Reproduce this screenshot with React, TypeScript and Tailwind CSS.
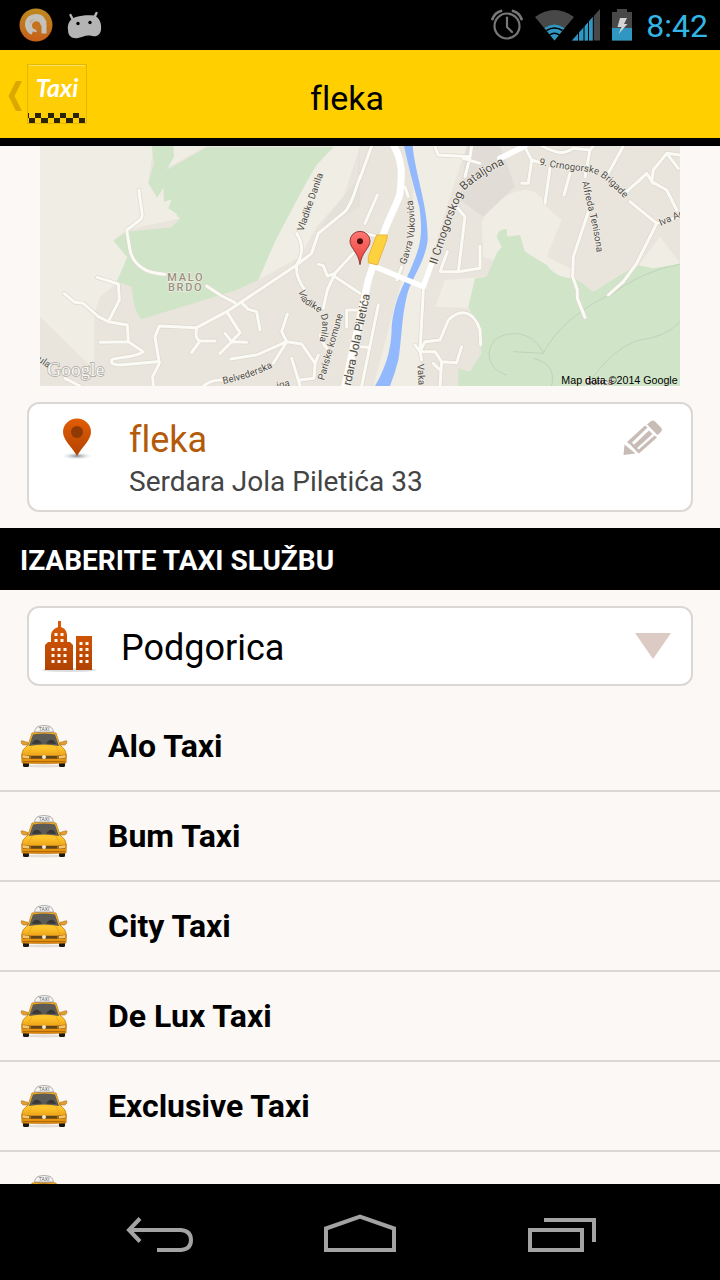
import React from 'react';

interface TaxiService {
  id: number;
  name: string;
}

const services: TaxiService[] = [
  { id: 1, name: 'Alo Taxi' },
  { id: 2, name: 'Bum Taxi' },
  { id: 3, name: 'City Taxi' },
  { id: 4, name: 'De Lux Taxi' },
  { id: 5, name: 'Exclusive Taxi' },
  { id: 6, name: 'G Taxi' }
];

const StatusBar: React.FC = () => (
  <div className="flex h-[50px] shrink-0 items-center justify-between bg-black pl-[19px] pr-3">
    <div className="flex items-center gap-[14px]">
      <svg className="h-[34px] w-[34px]" viewBox="0 0 34 34">
        <defs>
          <linearGradient id="avast" x1="0" y1="0" x2="0" y2="1">
            <stop offset="0" stopColor="#bd8a20" />
            <stop offset="1" stopColor="#c65f18" />
          </linearGradient>
        </defs>
        <circle cx="17" cy="17" r="16.5" fill="url(#avast)" />
        <path
          d="M13.500 24.500 C6 21 6.500 8.500 17 8.500 C22.500 8.500 25 12 25 16.500 V25.500"
          fill="none"
          stroke="#c4c1bd"
          strokeWidth="5"
        />
        <path d="M23 17.500 A5.500 5.500 0 1 0 17.500 23" fill="none" stroke="#c4c1bd" strokeWidth="2.500" />
        <circle cx="17" cy="17.500" r="3.800" fill="#c4731c" />
      </svg>
      <svg className="h-[28px] w-[36px]" viewBox="0 0 36 28">
        <path
          d="M3.500 4 L6 9 M29.500 2 L27.500 6"
          stroke="#b4b4b4"
          strokeWidth="2.500"
          strokeLinecap="round"
        />
        <path
          d="M9 6 C15 4 22 4 27 4.500 C32 6 35 12 34 19 C33 25 28 26.500 23 24.500 C18 24 16 26 11 27 C5 28 1 25 1 19 C0 13 3 7.500 9 6 Z"
          fill="#b4b4b4"
        />
        <circle cx="11" cy="12.500" r="1.700" fill="#000" />
        <circle cx="23" cy="11.500" r="1.700" fill="#000" />
      </svg>
    </div>
    <div className="flex items-center">
      <svg className="h-[36px] w-[144px]" viewBox="0 0 144 36">
        {/* alarm */}
        <g fill="none" stroke="#777" strokeWidth="2.200" strokeLinecap="round">
          <circle cx="17" cy="19" r="12.500" />
          <path d="M17 10.500 V20 L22 25" />
          <path d="M2.500 12 C4 8 7 5 11 4 M23 4 C27 5 30 8 31.500 12" strokeWidth="2.800" />
        </g>
        {/* wifi */}
        <path d="M64.500 33.500 L45 10 Q64.500 -4 84 10 Z" fill="#484848" />
        <path d="M64.500 33.500 L54.500 21 Q64.500 14 74.500 21 Z" fill="#2f97c1" />
        <path d="M56.500 23.500 Q64.500 18.500 72.500 23.500 M59.500 28 Q64.500 24.500 69.500 28" fill="none" stroke="#000" strokeWidth="1.500" />
        {/* signal */}
        <path d="M110 2 V33.500 H82 Z" fill="#484848" />
        <path d="M82 33.500 L103 9.800 V33.500 Z" fill="#2f97c1" />
        <path d="M88.500 20 V34 M94 14 V34 M98.500 10 V34 M103.300 6 V34" stroke="#000" strokeWidth="1" />
        {/* battery */}
        <path d="M122 5 H127 V2 H137 V5 H142 V33.500 H122 Z" fill="#484848" />
        <path d="M122 21 H142 V33.500 H122 Z" fill="#2f97c1" />
        <path d="M130 11 H137 L134 17 H137.500 L128.500 27 L131.500 20 H127.500 Z" fill="#d4d4d4" />
      </svg>
      <span className="ml-3 pt-[2px] text-[32px] leading-10 text-[#33b5e5]">8:42</span>
    </div>
  </div>
);

const AppLogo: React.FC = () => (
  <svg className="h-[60px] w-[60px]" viewBox="0 0 60 60">
    <rect x="0.5" y="0.5" width="59" height="59" fill="#fecd06" stroke="#e5b800" />
    <path d="M2 1.500 H58" stroke="#ffe26a" />
    <text
      x="30"
      y="33"
      textAnchor="middle"
      fill="#fff"
      fontFamily="Lato, sans-serif"
      fontStyle="italic"
      fontWeight="700"
      fontSize="25"
    >
      Taxi
    </text>
    <g fill="#2a2404">
      <rect x="8" y="49" width="6" height="5" />
      <rect x="21" y="49" width="6" height="5" />
      <rect x="33" y="49" width="6" height="5" />
      <rect x="46" y="49" width="6" height="5" />
      <rect x="1" y="49" width="1" height="5" />
      <rect x="2" y="54" width="6" height="5" />
      <rect x="14" y="54" width="7" height="5" />
      <rect x="27" y="54" width="6" height="5" />
      <rect x="39" y="54" width="7" height="5" />
      <rect x="52" y="54" width="6" height="5" />
    </g>
  </svg>
);

const ActionBar: React.FC = () => (
  <header className="relative flex h-24 shrink-0 items-center justify-center border-b-8 border-black bg-[#ffcf00]">
    <button type="button" aria-label="Nazad" className="absolute left-2 flex items-center gap-1">
      <svg className="h-[34px] w-[15px]" viewBox="0 0 15 34">
        <path d="M8 4 H14 L6.500 19 L14 34 H8 L0.500 19 Z" fill="#dba800" />
      </svg>
      <AppLogo />
    </button>
    <h1 className="mt-2 ml-[-26px] text-[34px] leading-10 text-black">fleka</h1>
  </header>
);

const TownMap: React.FC = () => (
  <svg className="block w-full" viewBox="0 18 1920 720" role="img" aria-label="Mapa">
    <defs>
      <path id="street-belvederska" d="M550 732 Q640 715 720 670" />
      <path id="street-danila" d="M776 452 C780 485 795 492 822 508 C858 530 850 560 830 640" />
      <path id="street-bataljona" d="M1190 375 C1225 270 1240 215 1275 150 Q1320 105 1440 50" />
      <path id="street-brigade" d="M1497 74 C1600 95 1640 90 1675 105 C1700 120 1730 150 1785 210" />
      <path id="street-tenisona" d="M1626 125 C1640 200 1665 260 1676 390" />
      <path id="street-gavra" d="M1096 375 C1129 290 1134 240 1106 130" />
      <linearGradient id="marker" x1="0" y1="0" x2="0" y2="1">
        <stop offset="0" stopColor="#ff7672" />
        <stop offset="1" stopColor="#e8403c" />
      </linearGradient>
      <g id="streets">
        <path d="M297 150 C300 200 315 230 300 240 L260 270 C270 330 270 350 290 370 C320 400 350 400 375 403 M500 438 L545 468 L585 488" />
        <path d="M72 460 L105 487 L130 490 L175 530 L205 545 L262 555 L265 605 L310 635 C280 655 225 650 215 660 Q210 675 240 675 L350 665 M180 607 L265 605 M172 412 L235 432 L238 480 L205 545" />
        <path d="M340 738 L338 710 L358 670 L345 590 L358 558 L470 563 L560 515 L770 375 L815 340 L835 280 L915 215 C940 185 945 150 960 110" />
        <path d="M470 563 C465 590 470 600 480 603 H525 M480 603 L455 637 M560 515 L600 578 L570 610 L540 640 M555 580 L575 605 L620 607 M605 488 L625 508 L650 515 L660 570" />
        <path d="M770 280 C795 320 785 350 770 375 Q765 410 795 450 M835 373 L850 377 L862 408 L885 400 M940 340 L885 400 L862 450 L850 505 M885 410 L960 460" />
        <path d="M572 657 L650 645 L740 605 L725 575 L742 522 M740 605 L785 612 L825 670 L822 715 L780 720 M740 605 L700 670 M835 645 L825 670 M755 655 L775 720 L780 738 M490 738 Q520 715 560 722 M840 585 Q850 620 875 640 M75 715 L120 738 M960 510 H920 V560" />
        <path d="M995 18 L960 115 M1012 165 L975 250 M975 280 L1035 295 M1095 140 L1105 170 M1085 380 L1070 420 M1015 495 L965 738 M960 620 L985 622" />
        <path d="M1185 20 L1195 45 L1290 50 L1275 110 M1290 50 L1295 18 M1270 55 L1320 70 M1455 22 L1475 60 L1465 130 H1445 M1475 60 L1500 68 M1505 18 C1550 40 1570 45 1600 25 L1650 30 L1635 110 M1650 30 L1660 18" />
        <path d="M1530 85 L1515 190 M1590 100 L1572 165 M1750 18 L1705 100 M1770 185 L1850 250 L1920 230 M1850 250 L1790 370 L1750 425 L1705 465 M1645 215 L1610 320 L1600 350 L1598 410 L1612 450 L1612 475 L1635 532 M1795 125 L1820 100 L1840 130 M1820 100 L1760 155" />
        <path d="M1920 45 L1880 40 L1840 90 L1835 125 L1880 150 L1910 210 M1880 40 L1915 85" />
        <path d="M1250 200 L1275 230 L1255 395 M1222 335 L1200 395 L1255 395 L1320 385 V318 M1150 450 L1140 635 L1125 615 M1140 635 L1145 660 M1140 635 L1155 605 L1200 600 L1225 540 C1260 505 1300 510 1320 570 L1322 615 M1140 635 H1185 L1205 665 L1250 668 L1265 620 M1205 665 L1200 738 M1200 690 L1180 670" />
      </g>
    </defs>

    <rect y="18" width="1920" height="720" fill="#e9e5dd" />
    {/* open ground */}
    <g fill="#f0ede4">
      <path d="M0 18 H340 L325 130 L350 170 L420 235 L260 270 L220 300 L262 350 L230 430 L180 470 L163 520 V690 L0 530 Z" />
      <path d="M880 18 H960 L910 170 L830 260 L780 350 L655 420 L700 300 L830 70 Z" />
      <path d="M400 18 H500 L380 85 Z" />
      <path d="M1100 18 H1280 L1230 170 L1150 430 L1140 738 H1000 L1080 440 L1110 300 L1120 150 Z" />
      <path d="M1325 250 C1340 200 1390 160 1450 150 Q1500 150 1520 200 L1565 240 L1520 350 L1600 390 L1590 430 L1330 350 Z" />
      <path d="M1215 420 L1330 410 L1310 505 L1185 500 Z" />
      <path d="M1800 370 L1860 290 L1920 370 V400 H1800 Z" />
    </g>
    <path d="M1280 18 H1380 L1425 140 L1330 230 L1260 180 Z" fill="#e1ddd6" />
    <path d="M960 18 L950 120 L840 260 L880 250 L960 200 Z" fill="#e4e1d9" />
    {/* parks */}
    <g fill="#d0e5c8">
      <path d="M335 18 H400 L402 50 L380 90 L500 22 H880 L830 75 C790 140 745 230 705 305 L655 420 L590 450 L305 538 C280 510 280 480 275 440 L230 425 L262 352 L220 302 L262 275 L395 262 L420 235 L385 210 L350 170 L325 130 L342 70 Z" />
      <path d="M1370 290 Q1375 265 1400 268 L1402 290 L1440 285 L1455 335 L1520 375 C1545 410 1590 420 1600 410 L1660 455 L1790 375 L1840 385 L1920 372 V738 H1255 V685 L1290 695 L1325 640 L1315 560 L1285 500 L1305 415 L1340 410 L1370 340 L1385 320 Z" />
    </g>
    <path d="M350 175 L370 145 L372 185 L395 178 L385 205 L415 225 L370 230 Z" fill="#f0ede4" />
    {/* park tracks */}
    <g fill="none" stroke="#bfd3b8" strokeWidth="3">
      <path d="M1705 465 Q1560 540 1510 640 L1420 635 M1705 470 Q1800 395 1920 372" />
      <path d="M1510 640 C1480 570 1400 570 1365 600 C1330 640 1350 690 1400 705 M1480 655 Q1550 670 1535 738" />
      <path d="M1640 738 Q1720 620 1800 600 Q1880 590 1920 545" />
    </g>
    {/* river */}
    <path
      d="M1092 18 H1118 C1125 100 1165 200 1163 300 C1155 370 1110 420 1100 470 C1085 530 1085 600 1075 660 Q1065 700 1050 738 H1005 C1045 670 1055 610 1055 560 C1065 470 1090 440 1115 380 C1140 320 1150 290 1138 200 Q1110 100 1092 18 Z"
      fill="#92b8fd"
    />

    {/* streets, drawn as a grey edge with a pale core on top */}
    <g fill="none" strokeLinecap="round" strokeLinejoin="round">
      <use href="#streets" stroke="#dcd8cf" strokeWidth="13" />
      <use href="#streets" stroke="#fbfaf5" strokeWidth="9" />
      <g stroke="#fff">
        <path d="M1062 18 C1090 70 1085 110 1080 160 C1070 200 1040 240 1025 300 L985 420 L915 738" strokeWidth="21" />
        <path d="M1000 378 L1150 440 L1175 370" strokeWidth="16" />
        <path d="M1380 55 L1455 18" strokeWidth="17" />
      </g>
    </g>
    <path d="M1010 285 H1042 L1040 300 L1012 375 L985 368 V350 Z" fill="#fdd23e" stroke="#e9b73a" strokeWidth="3" />

    {/* labels */}
    <g fontFamily="Roboto, sans-serif" fill="#4e4b47" stroke="#f3f0e8" strokeWidth="4" paintOrder="stroke" fontSize="29">
      <g fill="#99907f" fontSize="33" fontWeight="500" letterSpacing="5">
        <text x="382" y="422">MALO</text>
        <text x="384" y="454">BRDO</text>
      </g>
      <text transform="translate(790 275) rotate(-71)">Vladike Danila</text>
      <text transform="translate(852 722) rotate(-74)">Pariske komune</text>
      <text transform="translate(932 738) rotate(-78)" fontSize="35">rdara Jola Piletića</text>
      <text transform="translate(1132 672) rotate(87)">Vaka</text>
      <text transform="translate(1862 258) rotate(-24)">Iva Ac</text>
      <text transform="translate(-8 662) rotate(35)">ula</text>
      <text transform="translate(712 746) rotate(-12)">iqa</text>
      <text x="1635" y="736">Gorica</text>
      <text><textPath href="#street-belvederska">Belvederska</textPath></text>
      <text><textPath href="#street-danila">Vladike Danila</textPath></text>
      <text fontSize="35"><textPath href="#street-bataljona">II Crnogorskog Bataljona</textPath></text>
      <text><textPath href="#street-brigade">9. Crnogorske Brigade</textPath></text>
      <text><textPath href="#street-tenisona">Alfreda Tenisona</textPath></text>
      <text><textPath href="#street-gavra">Gavra Vukovića</textPath></text>
    </g>
    <text x="22" y="707" fontFamily="Liberation Serif, serif" fontSize="58" fill="#f7f6f2" stroke="#aaa79f" strokeWidth="4" paintOrder="stroke">
      Google
    </text>
    <text x="1564" y="731" fontFamily="Liberation Sans, sans-serif" fontSize="32" fill="#000">
      Map data ©2014 Google
    </text>

    {/* marker */}
    <path
      d="M960 374 C955 335 930 325 930 303 A30 29 0 0 1 990 303 C990 325 965 335 960 374 Z"
      fill="url(#marker)"
      stroke="#8c3a3a"
      strokeWidth="3"
    />
    <circle cx="960" cy="304" r="9" fill="#4a0e0c" />
  </svg>
);

const PinIcon: React.FC = () => (
  <svg className="mt-[2px] h-[44px] w-[40px]" viewBox="0 0 40 44">
    <defs>
      <linearGradient id="pin" x1="0" y1="0" x2="0" y2="1">
        <stop offset="0" stopColor="#e25d05" />
        <stop offset="1" stopColor="#b14300" />
      </linearGradient>
      <radialGradient id="pinShadow">
        <stop offset="0" stopColor="#7b8794" />
        <stop offset="1" stopColor="#fff" stopOpacity="0" />
      </radialGradient>
    </defs>
    <ellipse cx="20" cy="38" rx="17" ry="4" fill="url(#pinShadow)" />
    <path d="M20 38 C15 29 6 22 6 14 A14 13.500 0 0 1 34 14 C34 22 25 29 20 38 Z" fill="url(#pin)" />
    <circle cx="20" cy="14" r="6" fill="#8f3a05" />
  </svg>
);

const PencilIcon: React.FC = () => (
  <svg className="h-[36px] w-[40px]" viewBox="0 0 40 36">
    <g fill="#c9bcb6">
      <path d="M0.500 35 L1.500 24.500 L12.500 33.500 Z" />
      {/* three strips of the body */}
      <path d="M4 22 L22 5.500 L24.500 7.500 L7 24.500 Z" />
      <path d="M9 26.500 L26 10.500 L29.500 14 L12.500 29.500 Z" />
      <path d="M14 31 L31.500 15.500 L34 17.500 L16 33.500 Z" />
      <path d="M5 22 L7 20.500 L17 31 L15 33 Z" />
      <path d="M24 4.500 L28 1 Q30 0 32 1.500 L38.500 8 Q39.500 10 38 12 L34.500 15 Z" />
    </g>
  </svg>
);

const CityIcon: React.FC = () => (
  <svg className="h-[52px] w-[56px]" viewBox="0 0 56 52">
    <defs>
      <linearGradient id="city" x1="0" y1="0" x2="0" y2="1">
        <stop offset="0" stopColor="#dc5c05" />
        <stop offset="1" stopColor="#b04202" />
      </linearGradient>
    </defs>
    <ellipse cx="28" cy="50" rx="27" ry="2" fill="#ddd" />
    <path
      d="M17 1 H20 V7 L23 8.500 Q26 11 26 16 V22 H29 L32 25 V50 H4 V25 L7 22 H10 V16 Q10 11 14 8.500 L17 7 Z M35 16 H51 V50 H35 Z"
      fill="url(#city)"
    />
    <path
      d="M15 13V16M21 13V16M15 19V22M21 19V22 M12 28V31M18 28V31M24 28V31 M12 34V37M18 34V37M24 34V37 M12 40V43M18 40V43M24 40V43 M40 22V25M46 22V25 M40 28V31M46 28V31 M40 34V37M46 34V37 M40 40V43M46 40V43"
      stroke="#fff6ee"
      strokeWidth="3"
    />
  </svg>
);

const TaxiIcon: React.FC = () => (
  <svg className="h-[44px] w-12" viewBox="0 0 48 44">
    <defs>
      <linearGradient id="body" x1="0" y1="0" x2="0" y2="1">
        <stop offset="0" stopColor="#f5a81c" />
        <stop offset="0.500" stopColor="#ffc62b" />
        <stop offset="1" stopColor="#dd8406" />
      </linearGradient>
    </defs>
    <ellipse cx="24" cy="42" rx="22" ry="1.500" fill="#e3ded8" />
    <rect x="3" y="37" width="6" height="6" rx="1.500" fill="#1d1812" />
    <rect x="39" y="37" width="6" height="6" rx="1.500" fill="#1d1812" />
    <path d="M12 9 Q24 6.500 36 9 L40 21 Q46 25 46.500 31 L46 39 Q24 40 2 39 L1.500 31 Q2 25 8 21 Z" fill="url(#body)" stroke="#b97b1b" strokeWidth="0.700" />
    <path d="M13 10.500 Q24 8.500 35 10.500 L39 22 Q24 19 9 22 Z" fill="#5c5b56" />
    <path d="M12 20 Q16 12 22 19.500 M26 19.500 Q32 12 36 20" fill="#393835" />
    <path d="M1 18 Q1 16 3 17 L8 18.500 V21 H3.500 Q1.500 20.500 1 18 Z M47 18 Q47 16 45 17 L40 18.500 V21 H44.500 Q46.500 20.500 47 18 Z" fill="#e5a031" stroke="#a4701f" strokeWidth="0.600" />
    <path d="M12 22.500 L8 30 M36 22.500 L40 30" stroke="#e9a51e" strokeWidth="0.800" />
    <path d="M2 30.500 L11 31.500 H37 L46 30.500 L45 35 H3 Z" fill="#a96c18" />
    <path d="M11 32 H37 V34.500 H11 Z" fill="#5f4418" />
    <path d="M2.500 31 L9 32 V34.500 L3 34 Z M45.500 31 L39 32 V34.500 L45 34 Z" fill="#f4c66c" />
    <circle cx="24" cy="33" r="2" fill="#f1ead9" />
    <path d="M3 37.500 H45" stroke="#b36a0b" />
    <path d="M14.500 8 Q15.500 2.500 20 2 Q24 1 28 2 Q32.500 2.500 33.500 8 Z" fill="#f5f5f5" stroke="#9a9a9a" strokeWidth="0.800" />
    <text x="24" y="7" textAnchor="middle" fontFamily="Roboto, sans-serif" fontSize="5" fill="#666">
      TAXI
    </text>
  </svg>
);

const NavBar: React.FC = () => (
  <nav className="flex h-24 shrink-0 items-end justify-center gap-[120px] bg-black pb-[2px]">
    <button type="button" aria-label="Back" className="h-20 w-20">
      <svg className="h-20 w-20" viewBox="0 0 80 80" fill="none" stroke="#a3a3a3" strokeWidth="4">
        <path d="M20 20.500 L9 32 L20 43.500 M10 32 H61 Q71 33 71 42 Q71 51 61 52 H37" />
      </svg>
    </button>
    <button type="button" aria-label="Home" className="h-20 w-20">
      <svg className="h-20 w-20" viewBox="0 0 80 80" fill="none" stroke="#a3a3a3" strokeWidth="4">
        <path d="M6 52 V30.500 L40 18.500 L74 30.500 V52 Z" />
      </svg>
    </button>
    <button type="button" aria-label="Recent apps" className="h-20 w-20">
      <svg className="h-20 w-20" viewBox="0 0 80 80" fill="none" stroke="#a3a3a3" strokeWidth="4">
        <path d="M10 32 H62 V52 H10 Z M24 22 H74 V44" />
      </svg>
    </button>
  </nav>
);

const App: React.FC = () => {
  return (
    <div className="flex h-screen flex-col overflow-hidden bg-[#fcf8f5] font-[Roboto,sans-serif] [font-variant-ligatures:no-common-ligatures]">
      <StatusBar />
      <ActionBar />

      <main className="flex min-h-0 flex-1 flex-col overflow-hidden">
        <div className="shrink-0 px-10">
          <TownMap />
        </div>

        {/* Saved address */}
        <section className="mx-[27px] mt-4 flex h-[110px] shrink-0 items-start rounded-xl border-2 border-[#dbd7d4] bg-white pt-3 pr-7 pl-7">
          <PinIcon />
          <div className="ml-8 flex-1">
            <h2 className="text-4xl leading-[48px] text-[#b35b0b]">fleka</h2>
            <p className="text-[28px] leading-9 text-[#444]">Serdara Jola Piletića 33</p>
          </div>
          <button type="button" aria-label="Izmeni" className="mt-1">
            <PencilIcon />
          </button>
        </section>

        <h2 className="mt-4 flex h-[62px] shrink-0 items-center bg-black px-5 pt-1 text-[28px] font-bold text-white">
          IZABERITE TAXI SLUŽBU
        </h2>

        {/* City picker */}
        <div className="relative mx-[27px] mt-4 flex h-20 shrink-0 items-center rounded-xl border-2 border-[#dbd7d4] bg-white">
          <label htmlFor="city-select" aria-label="Grad" className="absolute left-3">
            <CityIcon />
          </label>
          <select
            id="city-select"
            defaultValue="Podgorica"
            className="h-full w-full appearance-none bg-transparent pt-1 pl-[92px] text-4xl text-black"
          >
            <option>Podgorica</option>
          </select>
          <svg className="pointer-events-none absolute right-5 h-[26px] w-9" viewBox="0 0 36 26">
            <path d="M0 0 H36 L18 26 Z" fill="#dccbc5" />
          </svg>
        </div>

        <ul className="mt-4 min-h-0 flex-1 overflow-hidden">
          {services.map((service) => (
            <li key={service.id} className="border-b-2 border-[#dbd7d4]">
              <button type="button" className="flex h-[88px] w-full items-center gap-10 px-5 text-left">
                <TaxiIcon />
                <span className="text-[32px] font-bold text-black">{service.name}</span>
              </button>
            </li>
          ))}
        </ul>
      </main>

      <NavBar />
    </div>
  );
};

export default App;
